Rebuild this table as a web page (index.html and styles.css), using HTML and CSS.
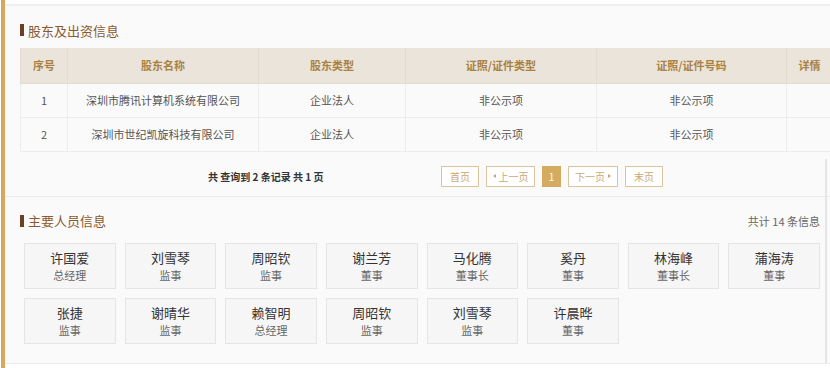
FILE: index.html
```html
<!DOCTYPE html>
<html lang="zh">
<head>
<meta charset="utf-8">
<link rel="stylesheet" href="styles.css">
</head>
<body>
<div class="page">
  <div class="topbar"></div>
  <section class="sec sec-holders">
    <h2 class="sec-title"><span class="mark"></span>股东及出资信息</h2>
    <table class="tbl">
      <colgroup>
        <col class="c1"><col class="c2"><col class="c3"><col class="c4"><col class="c5"><col class="c6">
      </colgroup>
      <thead>
        <tr><th>序号</th><th>股东名称</th><th>股东类型</th><th>证照/证件类型</th><th>证照/证件号码</th><th>详情</th></tr>
      </thead>
      <tbody>
        <tr><td>1</td><td>深圳市腾讯计算机系统有限公司</td><td>企业法人</td><td>非公示项</td><td>非公示项</td><td></td></tr>
        <tr><td>2</td><td>深圳市世纪凯旋科技有限公司</td><td>企业法人</td><td>非公示项</td><td>非公示项</td><td></td></tr>
      </tbody>
    </table>
    <div class="pager">
      <div class="pager-info">共 查询到 2 条记录 共 1 页</div>
      <div class="pager-btns">
        <span class="pbtn w38">首页</span>
        <span class="pbtn w49"><span class="tri tri-l"></span>上一页</span>
        <span class="pbtn active">1</span>
        <span class="pbtn w50">下一页<span class="tri tri-r"></span></span>
        <span class="pbtn w38">末页</span>
      </div>
    </div>
  </section>
  <section class="sec sec-people">
    <div class="sec-head">
      <h2 class="sec-title"><span class="mark"></span>主要人员信息</h2>
      <span class="count">共计 14 条信息</span>
    </div>
    <div class="cards">
      <div class="card"><div class="name">许国爱</div><div class="role">总经理</div></div>
      <div class="card"><div class="name">刘雪琴</div><div class="role">监事</div></div>
      <div class="card"><div class="name">周昭钦</div><div class="role">监事</div></div>
      <div class="card"><div class="name">谢兰芳</div><div class="role">董事</div></div>
      <div class="card"><div class="name">马化腾</div><div class="role">董事长</div></div>
      <div class="card"><div class="name">奚丹</div><div class="role">董事</div></div>
      <div class="card"><div class="name">林海峰</div><div class="role">董事长</div></div>
      <div class="card"><div class="name">蒲海涛</div><div class="role">董事</div></div>
      <div class="card"><div class="name">张捷</div><div class="role">监事</div></div>
      <div class="card"><div class="name">谢晴华</div><div class="role">监事</div></div>
      <div class="card"><div class="name">赖智明</div><div class="role">总经理</div></div>
      <div class="card"><div class="name">周昭钦</div><div class="role">监事</div></div>
      <div class="card"><div class="name">刘雪琴</div><div class="role">监事</div></div>
      <div class="card"><div class="name">许晨晔</div><div class="role">董事</div></div>
    </div>
  </section>
  <div class="edge-line"></div>
</div>
</body>
</html>
```

FILE: styles.css
```css
* { box-sizing: border-box; }
html, body {
  margin: 0;
  padding: 0;
  width: 830px;
  height: 368px;
  overflow: hidden;
  background: #ffffff;
  font-family: "Noto Sans CJK SC", "Noto Sans", sans-serif;
}
.page {
  position: relative;
  margin-left: 1px;
  border-left: 4px solid #d5a85b;
  height: 368px;
}
.topbar {
  height: 6px;
  background: #ffffff;
  border-bottom: 2px solid #efefef;
}
.sec {
  background: #fafafa;
  border-bottom: 1px solid #ececec;
}
.sec-holders {
  padding: 14px 0 9px 15px;
}
.sec-title {
  margin: 0;
  display: flex;
  align-items: center;
  height: 20px;
  font-size: 13px;
  font-weight: normal;
  color: #8a5a2e;
  letter-spacing: 0;
}
.mark {
  display: inline-block;
  width: 4px;
  height: 12px;
  background: #6a4124;
  margin-right: 4px;
}
.tbl {
  margin-top: 8px;
  width: 812px;
  border-collapse: collapse;
  table-layout: fixed;
  font-size: 11px;
}
.c1 { width: 47px; }
.c2 { width: 191px; }
.c3 { width: 147px; }
.c4 { width: 191px; }
.c5 { width: 190px; }
.c6 { width: 46px; }
.tbl th {
  height: 35px;
  background: #ebe4da;
  color: #a98243;
  font-weight: bold;
  border: 1px solid #e4dcd0;
  border-top: none;
  padding: 0;
}
.tbl td {
  height: 34px;
  color: #555;
  text-align: center;
  border: 1px solid #ededed;
  background: #fbfafa;
  padding: 0;
}
.pager {
  display: flex;
  align-items: center;
  margin-top: 14px;
  padding-left: 188px;
  height: 21px;
}
.pager-info {
  width: 233px;
  font-size: 10px;
  color: #333;
  font-weight: bold;
  font-family: "Noto Sans CJK SC", serif;
}
.pager-btns {
  display: flex;
  gap: 7px;
}
.pbtn {
  display: inline-flex;
  align-items: center;
  justify-content: center;
  height: 21px;
  border: 1px solid #dcc49c;
  color: #c9a878;
  font-size: 10px;
  background: #fff;
  gap: 3px;
}
.w38 { width: 38px; }
.w49 { width: 49px; }
.w50 { width: 50px; }
.pbtn.active {
  width: 19px;
  background: #d5ab5f;
  border-color: #d5ab5f;
  color: #fff;
}
.tri {
  display: inline-block;
  width: 0;
  height: 0;
  border-top: 2.5px solid transparent;
  border-bottom: 2.5px solid transparent;
}
.tri-l { border-right: 3px solid #c9a878; }
.tri-r { border-left: 3px solid #c9a878; }
.sec-people {
  padding: 14px 10px 19px 15px;
}
.sec-head {
  display: flex;
  justify-content: space-between;
  align-items: center;
}
.count {
  font-size: 11px;
  color: #666;
}
.cards {
  margin-top: 12px;
  margin-left: 4px;
  width: 796px;
  display: grid;
  grid-template-columns: repeat(8, 1fr);
  column-gap: 9px;
  row-gap: 9px;
}
.card {
  height: 46px;
  background: #f6f6f7;
  border: 1px solid #e5e5e7;
  display: flex;
  flex-direction: column;
  align-items: center;
  justify-content: center;
}
.name {
  font-size: 13px;
  color: #333;
  line-height: 19px;
}
.role {
  font-size: 11px;
  color: #666;
  line-height: 17px;
}
.edge-line {
  position: absolute;
  left: 820px;
  top: 159px;
  width: 2px;
  height: 204px;
  background: #e6e6e6;
}
```
